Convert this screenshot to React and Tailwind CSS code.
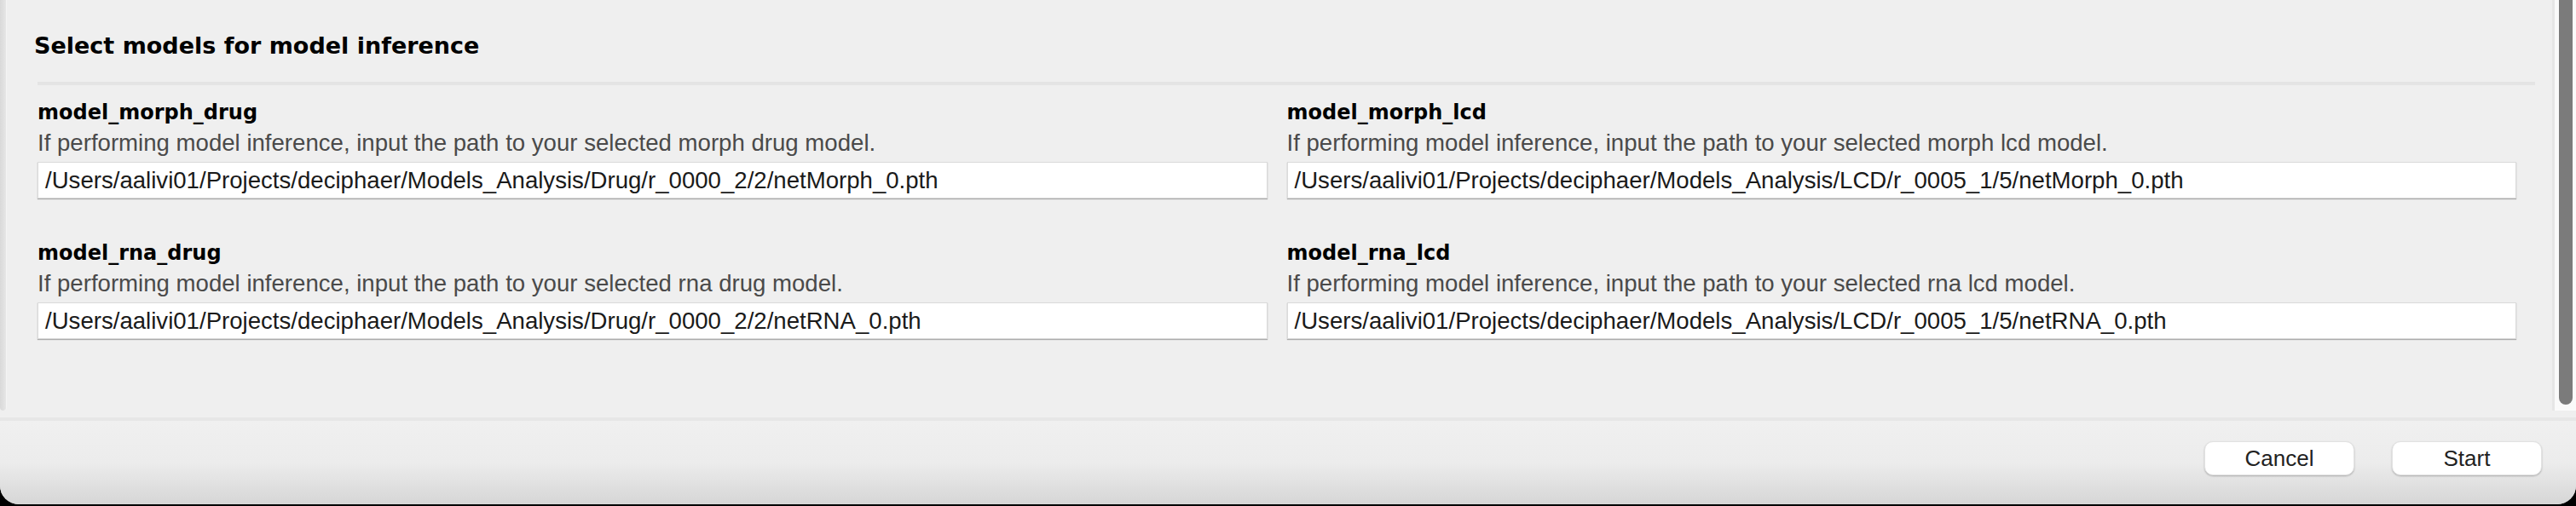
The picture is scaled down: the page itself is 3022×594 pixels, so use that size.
import React from 'react'

const fields = [
  {
    name: 'model_morph_drug',
    help: 'If performing model inference, input the path to your selected morph drug model.',
    value: '/Users/aalivi01/Projects/deciphaer/Models_Analysis/Drug/r_0000_2/2/netMorph_0.pth',
  },
  {
    name: 'model_morph_lcd',
    help: 'If performing model inference, input the path to your selected morph lcd model.',
    value: '/Users/aalivi01/Projects/deciphaer/Models_Analysis/LCD/r_0005_1/5/netMorph_0.pth',
  },
  {
    name: 'model_rna_drug',
    help: 'If performing model inference, input the path to your selected rna drug model.',
    value: '/Users/aalivi01/Projects/deciphaer/Models_Analysis/Drug/r_0000_2/2/netRNA_0.pth',
  },
  {
    name: 'model_rna_lcd',
    help: 'If performing model inference, input the path to your selected rna lcd model.',
    value: '/Users/aalivi01/Projects/deciphaer/Models_Analysis/LCD/r_0005_1/5/netRNA_0.pth',
  },
]

function Field({ name, help, value }) {
  return (
    <div className="flex flex-col">
      <div className="h-[24px] text-[24px] leading-[24px] font-bold text-black font-['DejaVu_Sans',sans-serif] whitespace-nowrap">
        {name}
      </div>
      <div className="mt-[10px] h-[27px] text-[27.6px] leading-[27px] text-[#4a4a4a] font-['Liberation_Sans',Arial,sans-serif] whitespace-nowrap">
        {help}
      </div>
      <div className="mt-[9px] h-[43px] bg-white border border-[#dadada] shadow-[0_1px_1px_rgba(0,0,0,0.28)] flex items-center pl-[8px] overflow-hidden">
        <span className="text-[27.6px] leading-[27px] text-[#1a1a1a] font-['Liberation_Sans',Arial,sans-serif] whitespace-nowrap">
          {value}
        </span>
      </div>
    </div>
  )
}

function MacButton({ children }) {
  return (
    <button className="w-[176px] h-[40px] rounded-[10px] bg-white border border-[#e2e2e2] shadow-[0_1px_2px_rgba(0,0,0,0.25)] text-[26px] leading-[26px] text-[#222] font-['Liberation_Sans',Arial,sans-serif] flex items-center justify-center">
      {children}
    </button>
  )
}

export default function App() {
  return (
    <div className="w-[3022px] h-[594px] bg-black overflow-hidden">
      <div className="h-[592px] rounded-b-[22px] bg-[#efefef] flex flex-col overflow-hidden">
        {/* scroll area */}
        <div className="h-[482px] flex">
          <div className="w-[8px] h-full rounded-b-[4px] bg-gradient-to-r from-[#d9d9d9] to-[#e6e6e6] border-r border-[#f4f4f4]" />

          <div className="flex-1 pl-[32px] pr-[20px]">
            <div className="pt-[40px] h-[96px] text-[27px] leading-[28px] font-bold text-black font-['DejaVu_Sans',sans-serif]">
              Select models for model inference
            </div>
            <div className="ml-[4px] h-[4px] bg-[#e4e4e4]" />
            <div className="ml-[4px] mr-[22px] mt-[20px] grid grid-cols-2 gap-x-[23px] gap-y-[52px]">
              {fields.map((f) => (
                <Field key={f.name} {...f} />
              ))}
            </div>
          </div>

          {/* scrollbar */}
          <div className="w-[28px] h-full flex">
            <div className="w-[3px] h-full bg-[#e6e6e6]" />
            <div className="flex-1 h-full bg-[#fafafa] flex justify-center">
              <div className="w-[16px] h-[475px] rounded-b-[8px] bg-[#7b7b7b]" />
            </div>
          </div>
        </div>

        <div className="h-[8px]" />
        <div className="h-[4px] bg-[#e6e6e6]" />

        {/* footer */}
        <div className="flex-1 bg-gradient-to-b from-[#f0f0f0] via-[#ececec] to-[#d6d6d6] flex justify-end items-start pt-[24px] pr-[40px] gap-[44px]">
          <MacButton>Cancel</MacButton>
          <MacButton>Start</MacButton>
        </div>
      </div>
    </div>
  )
}
